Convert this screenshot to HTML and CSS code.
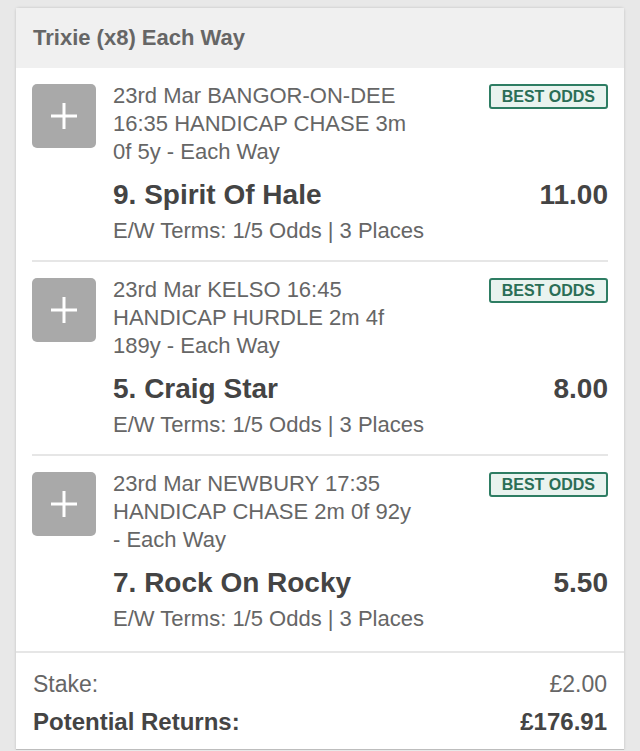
FILE: index.html
```html
<!DOCTYPE html>
<html>
<head>
<meta charset="utf-8">
<link rel="stylesheet" href="styles.css">
</head>
<body>
<div class="card">
  <div class="card-head">Trixie (x8) Each Way</div>
  <div class="legs">
    <div class="leg">
      <div class="plus"><svg width="30" height="30" viewBox="0 0 30 30"><path d="M15 2V28M2 15H28" stroke="#fff" stroke-width="3"/></svg></div>
      <div class="info">
        <div class="top">
          <div class="meta">23rd Mar BANGOR-ON-DEE 16:35 HANDICAP CHASE 3m 0f 5y - Each Way</div>
          <div class="badge">BEST ODDS</div>
        </div>
        <div class="sel"><span class="name">9. Spirit Of Hale</span><span class="odds">11.00</span></div>
        <div class="terms">E/W Terms: 1/5 Odds | 3 Places</div>
      </div>
    </div>
    <div class="leg">
      <div class="plus"><svg width="30" height="30" viewBox="0 0 30 30"><path d="M15 2V28M2 15H28" stroke="#fff" stroke-width="3"/></svg></div>
      <div class="info">
        <div class="top">
          <div class="meta">23rd Mar KELSO 16:45 HANDICAP HURDLE 2m 4f 189y - Each Way</div>
          <div class="badge">BEST ODDS</div>
        </div>
        <div class="sel"><span class="name">5. Craig Star</span><span class="odds">8.00</span></div>
        <div class="terms">E/W Terms: 1/5 Odds | 3 Places</div>
      </div>
    </div>
    <div class="leg">
      <div class="plus"><svg width="30" height="30" viewBox="0 0 30 30"><path d="M15 2V28M2 15H28" stroke="#fff" stroke-width="3"/></svg></div>
      <div class="info">
        <div class="top">
          <div class="meta">23rd Mar NEWBURY 17:35 HANDICAP CHASE 2m 0f 92y - Each Way</div>
          <div class="badge">BEST ODDS</div>
        </div>
        <div class="sel"><span class="name">7. Rock On Rocky</span><span class="odds">5.50</span></div>
        <div class="terms">E/W Terms: 1/5 Odds | 3 Places</div>
      </div>
    </div>
  </div>
  <div class="summary">
    <div class="row stake"><span>Stake:</span><span>£2.00</span></div>
    <div class="row returns"><span>Potential Returns:</span><span>£176.91</span></div>
  </div>
</div>
</body>
</html>
```

FILE: styles.css
```css
html, body {
  margin: 0;
  padding: 0;
  background: #e8e8e8;
}
body {
  padding: 8px 16px 0;
  font-family: "Liberation Sans", Arial, sans-serif;
  color: #666;
}
.card {
  background: #fff;
  border-radius: 3px 3px 0 0;
  box-shadow: 0 0 3px rgba(0,0,0,0.18);
  border-bottom: 1px solid #bdbdbd;
  min-height: 742px;
  box-sizing: border-box;
}
.card-head {
  background: #f0f0f0;
  height: 60px;
  display: flex;
  align-items: center;
  padding-left: 17px;
  font-weight: bold;
  font-size: 22px;
  color: #666;
}
.legs {
  padding: 0 16px;
}
.leg {
  display: flex;
  padding: 16px 0 15px;
  border-bottom: 2px solid #e6e6e6;
}
.leg:last-child {
  border-bottom: none;
  padding-bottom: 18px;
}
.plus {
  width: 64px;
  height: 64px;
  background: #a9a9a9;
  border-radius: 5px;
  display: flex;
  align-items: center;
  justify-content: center;
  flex: none;
}
.info {
  flex: 1;
  margin-left: 17px;
}
.top {
  display: flex;
  justify-content: space-between;
  align-items: flex-start;
  margin-top: -2px;
}
.meta {
  width: 310px;
  font-size: 22px;
  line-height: 28px;
  color: #666;
}
.badge {
  border: 2px solid #2e7d63;
  background: #e9f3ef;
  color: #2a6e56;
  font-weight: bold;
  font-size: 16px;
  border-radius: 3px;
  height: 21px;
  line-height: 21px;
  padding: 0 11px;
  margin-top: 2px;
}
.sel {
  display: flex;
  justify-content: space-between;
  align-items: center;
  margin-top: 11px;
  height: 36px;
  font-weight: bold;
  font-size: 28px;
  color: #444;
}
.terms {
  margin-top: 4px;
  font-size: 22px;
  line-height: 28px;
  color: #666;
}
.summary {
  border-top: 2px solid #e6e6e6;
  padding: 17px 17px 0 17px;
}
.row {
  display: flex;
  justify-content: space-between;
  font-size: 23px;
}
.stake {
  color: #666;
  line-height: 28px;
}
.returns {
  margin-top: 10px;
  font-weight: bold;
  font-size: 24px;
  color: #444;
  line-height: 28px;
}
```
